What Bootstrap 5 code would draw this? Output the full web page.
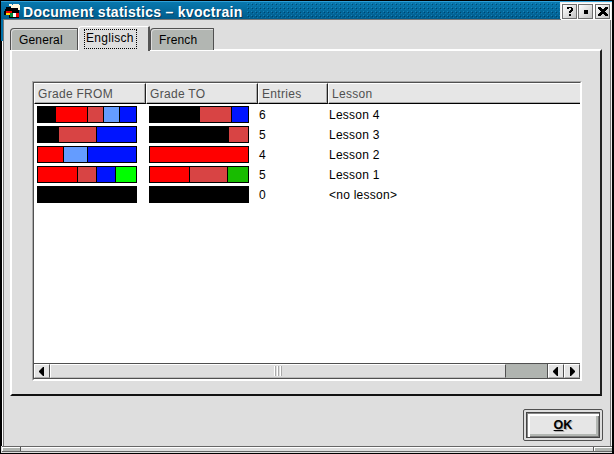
<!DOCTYPE html>
<html lang="en">
<head>
<meta charset="utf-8">
<title>Document statistics – kvoctrain</title>
<link href="https://cdn.jsdelivr.net/npm/bootstrap@5.3.0/dist/css/bootstrap.min.css" rel="stylesheet">
<style>
html,body{width:614px;height:454px;overflow:hidden;margin:0}
body{background:#dedede;font-family:"Liberation Sans",Arial,sans-serif;font-size:12px;line-height:16px;color:#000;letter-spacing:.25px}
.window{width:614px;height:454px;background:#000;padding:1px 2px 1px 1px}
.frame{background:#dedede;height:452px}
.titlebar{height:18px;background-image:linear-gradient(#0878ae,#005c8c);border-top:1px solid #30a0d8}
.caption{font-weight:700;font-size:14px;color:#fff;letter-spacing:.28px;line-height:20px;white-space:nowrap;padding:0 3px 0 3px;text-shadow:1px 1px #003c60}
.dots{background-image:radial-gradient(circle at 1.5px 1.5px,#2090cc .6px,transparent .7px),radial-gradient(circle at 2.5px 2.5px,#003458 .6px,transparent .7px),radial-gradient(circle at 3.5px 3.5px,#1080bc .6px,transparent .7px);background-size:4px 4px;opacity:.7}
.winbtns{background:#eee;padding:2px 2px 0 2px;gap:1px;width:52px}
.winbtn{width:15px;height:15px;border:1px solid #707070;outline:1px solid #fff;background:linear-gradient(135deg,#fff,#c4c4c4);border-radius:0}
.winbtn:last-child{margin-left:1px}
.content-area{padding-left:2px;background:linear-gradient(#0070a8 22px,transparent 22px),linear-gradient(90deg,#000 1px,#fff 1px);border-right:1px solid #eee;height:427px}
.inner{border:1px solid #777;border-bottom:0;background:#dedede;height:427px;width:100%;padding:6px 8px 0 6px}
.tabs{height:23px;align-items:flex-end;flex-wrap:nowrap;border:0}
.tabs .nav-link{height:22px;padding:3px 8px 0;border:1px solid #505050;border-bottom:0;border-radius:4px 1px 0 0;background:#b2b6b2;color:#000;line-height:16px;box-shadow:inset 1px 1px #ddd;letter-spacing:.15px}
.tabs .nav-link.active{height:25px;margin-bottom:-2px;border-color:#fff #555 #fff #fff;border-right-width:2px;background:#dedede;padding:2px 5px 0;position:relative;box-shadow:none}
.tab-a{width:68px}.tab-b{width:72px}.tab-c{width:64px}
.focusbox{display:block;border:1px dotted #000;padding:0 1px;height:20px;line-height:17px;width:53px;letter-spacing:.3px}
.page{height:347px;border:2px solid #fff;border-right:2px solid #222;border-bottom:2px solid #111;padding:30px 0 0 20px}
.listview{height:300px;border:1px solid #aaa;border-right-color:#fff;border-bottom-color:#fff;width:550px}
.listinner{height:298px;border:1px solid #505050;border-right-color:#fff;border-bottom-color:#fff;background:#fff}
.gridrow{display:grid;grid-template-columns:112px 112px 70px 1fr}
.headcell{height:21px;background:#e6e6e6;color:#505050;border:1px solid #fff;border-right:1px solid #222;border-bottom:1px solid #000;box-shadow:inset -1px -1px #aaa;padding:2px 0 0 3px;line-height:16px;letter-spacing:.3px}
.headcell:last-child{border-right:0;box-shadow:inset 0 -1px #aaa}
.datarow{height:20px;line-height:22px}
.datarow>.cell{padding-left:1px}
.bar{width:100px;height:17px;border:1px solid #000;margin:2px 0 0 3px;background:#000;gap:1px}
.seg{height:15px}
.r{background:#f00}.m{background:#d84444}.s{background:#649cff}.b{background:#0014ff}.g{background:#0f0}.dg{background:#18bc00}.k{background:#000}
.scroll{height:16px;border-top:1px solid #505050;border-bottom:1px solid #505050;background:#b0b4b0}
.arrow{width:16px;background:#e4e4e4;border:1px solid #fff;border-right:1px solid #505050;border-bottom-color:#aaa}
.thumb{width:456px;background:#dedede;border:1px solid #fff;border-right:1px solid #505050;border-bottom-color:#bbb}
.trough{border-right:1px solid #505050}
.okwrap{width:80px;height:32px;border:1px solid #505050;border-radius:2px;padding:2px;margin:13px -1px 0 auto}
.okbtn{width:74px;height:26px;display:block;border:1px solid #444;border-radius:0;background:#e6e6e6;box-shadow:inset 1px 1px #888,inset 3px 3px #fff,inset -1px -1px #777,inset -3px -3px #b2b6b2;font-size:12.5px;font-weight:700;line-height:16px;padding:0;color:#000;text-shadow:1px 1px #aaa}
.grip{height:6px;border-top:1px solid #666;border-bottom:1px solid #666;box-shadow:inset 0 1px #fff;margin-left:1px}
.grip span{display:block;width:19px;background:#b0b4b0;box-shadow:inset 1px 1px #fff}
.grip span:first-child{border-right:1px solid #555}
.grip span:last-child{border-left:1px solid #555}
</style>
</head>
<body>
<div class="window"><div class="frame">
<div class="titlebar d-flex">
<svg width="19" height="17" viewBox="1 2 19 17" class="flex-shrink-0" shape-rendering="crispEdges"><path fill="#000" d="M6 7h13v11H9v-3H4v-4h1V9h1z"/><path fill="#fff8dc" d="M9 4h3v1h1V4h6v1h1v5h-2V8H11V6H9z"/><path fill="#e00" d="M6 11h6v2H6z"/><path fill="#ffd800" d="M6 13h4v2H6z"/><path fill="#008c38" d="M10 13h3v4h-3z"/><path fill="#fff" d="M13 13h3v4h-3z"/><path fill="#e00" d="M16 13h3v4h-3z"/></svg>
<div class="caption">Document statistics – kvoctrain</div>
<div class="dots flex-grow-1"></div>
<div class="winbtns d-flex">
<svg class="winbtn" viewBox="0 0 13 13" shape-rendering="crispEdges"><path d="M4 2h5v1h1v3H9v1H8v1H6V6h1V5h1V3H6v1H4zM6 9h2v2H6z"/></svg>
<svg class="winbtn" viewBox="0 0 13 13" shape-rendering="crispEdges"><path d="M5 5h4v4H5z"/></svg>
<svg class="winbtn" viewBox="0 0 13 13" shape-rendering="crispEdges"><path d="M2 2h3v1h1v1h2V3h1V2h3v2h-1v1h-1v1H9v1h1v1h1v1h1v2H9v-1H8V9H6v1H5v1H2V9h1V8h1V7h1V6H4V5H3V4H2z"/></svg>
</div></div>
<div class="content-area"><div class="inner">
<div class="nav nav-tabs tabs">
<a class="nav-link tab-a">General</a>
<a class="nav-link tab-b active"><span class="focusbox">Englisch</span></a>
<a class="nav-link tab-c">French</a>
</div>
<div class="page"><div class="listview"><div class="listinner d-flex flex-column">
<div class="gridrow"><div class="headcell">Grade FROM</div><div class="headcell">Grade TO</div><div class="headcell">Entries</div><div class="headcell">Lesson</div></div>
<div class="flex-grow-1" id="rows"></div>
<div class="scroll d-flex">
<svg class="arrow" viewBox="0 0 14 12"><path d="M9 2v9H8L4 7V6l4-4z"/></svg>
<div class="thumb d-flex justify-content-center"><svg width="8" height="12" shape-rendering="crispEdges"><path stroke="#fff" d="M.5 1v10M3.500 1v10M6.500 1v10"/><path stroke="#aaa" d="M1.500 1v10M4.500 1v10M7.500 1v10"/></svg></div>
<div class="trough flex-grow-1"></div>
<svg class="arrow" viewBox="0 0 14 12"><path d="M9 2v9H8L4 7V6l4-4z"/></svg><svg class="arrow" viewBox="0 0 14 12"><path d="M5 2v9h1l4-4V6L6 2z"/></svg>
</div></div></div></div>
<div class="okwrap"><button class="btn okbtn"><u>O</u>K</button></div>
</div></div>
<div class="grip d-flex justify-content-between"><span></span><span></span></div>
</div></div>
<script src="https://cdn.jsdelivr.net/npm/bootstrap@5.3.0/dist/js/bootstrap.bundle.min.js"></script>
<script>
const data=[["k17 r31 m15 s15 b16","k49 m31 b16",6,"Lesson 4"],["k20 m37 b39","k78 m19",5,"Lesson 3"],["r25 s23 b48","r98",4,"Lesson 2"],["r39 m18 b18 g20","r39 m37 dg20",5,"Lesson 1"],["k98","k98",0,"<no lesson>"]];
const bar=s=>'<div class="bar d-flex">'+s.split(" ").map(t=>{const[,c,w]=t.match(/([a-z]+)(\d+)/);return `<div class="seg ${c}" style="width:${w}px"></div>`}).join("")+'</div>';
document.getElementById("rows").innerHTML=data.map(d=>`<div class="gridrow datarow">${bar(d[0])}${bar(d[1])}<div class="cell">${d[2]}</div><div class="cell">${d[3].replace("<","&lt;")}</div></div>`).join("");
</script>
</body></html>
